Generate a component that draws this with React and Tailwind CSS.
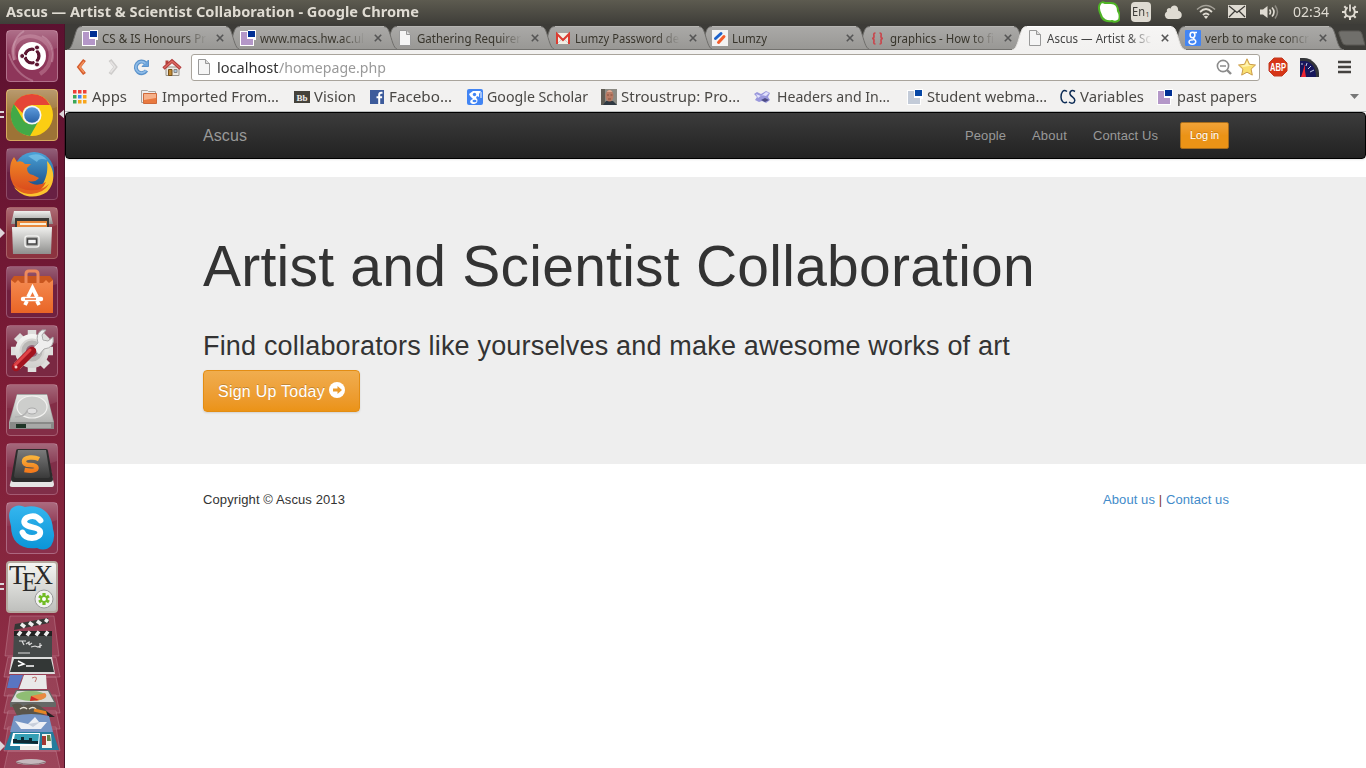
import { useLayoutEffect, useRef, useState } from "react";

/* Text that settles to a given width, by glyph width or by letter spacing. */
function Fit({ w, children, spacing = false, className = "" }) {
  const ref = useRef(null);
  const [style, setStyle] = useState({});
  useLayoutEffect(() => {
    const natural = ref.current.getBoundingClientRect().width;
    setStyle(
      spacing
        ? { letterSpacing: (w - natural) / children.length }
        : { transform: `scaleX(${w / natural})` }
    );
  }, []);
  return (
    <span className={`inline-block shrink-0 whitespace-nowrap ${className}`} style={{ width: w }}>
      <span ref={ref} className="inline-block origin-left" style={style}>{children}</span>
    </span>
  );
}

function Svg({ w = 16, h = 16, vb, className = "", children }) {
  return (
    <svg width={w} height={h} viewBox={vb || `0 0 ${w} ${h}`} className={`shrink-0 ${className}`} fill="none">
      {children}
    </svg>
  );
}

const Squares = ({ light = "#b497c8", dark = "#002f94" }) => (
  <Svg>
    <path d="M0 1h8V0h8v10h-2v6H0z" fill="#fff" />
    <path d="M1 2h6v7h6v6H1z" fill={light} />
    <path d="M8 1h7v6H8z" fill={dark} />
  </Svg>
);
const Page = ({ line = "#999" }) => (
  <Svg>
    <path d="M2.500.500h7l4 4v11h-11z" fill="#f5f5f5" stroke={line} />
    <path d="M9.500.500v4h4" fill="#ddd" stroke={line} />
  </Svg>
);
const Gmail = () => (
  <Svg>
    <path d="M1 3h14v11H1z" fill="#f2efe5" />
    <path d="M3 13l5-5 5 5" stroke="#ccc" />
    <path d="M2 14V4l6 6 6-6v10" stroke="#dc3c31" strokeWidth="2" />
  </Svg>
);
const LumzyIcon = () => (
  <Svg>
    <path d="M0 0h16v16H0z" fill="#f3f3f3" />
    <path d="M3.500 8.500l5.500-5" stroke="#1c62cb" strokeWidth="3" strokeLinecap="round" />
    <path d="M6.500 12.500l5.500-6" stroke="#f55d2b" strokeWidth="3" strokeLinecap="round" />
  </Svg>
);
const Braces = () => (
  <Svg>
    <path d="M5.500 3C3 3 4 5 4 6.500S3 8.500 2 8.500C3 8.500 4 9 4 10.500S3 14 5.500 14M9.500 3C12 3 11 5 11 6.500S12 8.500 13 8.500C12 8.500 11 9 11 10.500S12 14 9.500 14" stroke="#c8484e" strokeWidth="1.700" />
  </Svg>
);
const GoogleG = () => (
  <Svg>
    <rect width="16" height="16" rx="1" fill="#4285f4" />
    <ellipse cx="7.500" cy="5" rx="2.400" ry="2.700" stroke="#fff" strokeWidth="1.500" />
    <path d="M8.500 2.500H12M9 7.500c-2 1.500 2 2 1.800 4.200-.3 3.200-6.800 3.200-6.800.3C4 10.500 6 9.800 8.500 9.800" stroke="#fff" strokeWidth="1.500" />
  </Svg>
);

const tabs = [
  { icon: <Squares />, text: "CS & IS Honours Pr", w: 104 },
  { icon: <Squares />, text: "www.macs.hw.ac.ul", w: 104 },
  { icon: <Page />, text: "Gathering Requirer", w: 104 },
  { icon: <Gmail />, text: "Lumzy Password de", w: 104 },
  { icon: <LumzyIcon />, text: "Lumzy", w: 35 },
  { icon: <Braces />, text: "graphics - How to fi", w: 104 },
  { icon: <Page />, text: "Ascus — Artist & Sc", w: 104, active: true },
  { icon: <GoogleG />, text: "verb to make concr", w: 104 },
];
const layers = ["z-[8]", "z-[7]", "z-[6]", "z-[5]", "z-[4]", "z-[3]", "z-[10]", "z-[1]"];

function Tab({ tab, i }) {
  return (
    <div className={`relative flex h-[26px] w-[157.5px] shrink-0 items-center pl-[15px] pt-[2px] ${layers[i]}`}>
      <svg width="174" height="26" viewBox="0 0 174 26" className="absolute left-0 top-0 -z-10" fill="none">
        <defs>
          <linearGradient id={`tab${i}`} x2="0" y2="1">
            <stop stopColor={tab.active ? "#f6f5f4" : "#aaa9a7"} />
            <stop offset="1" stopColor={tab.active ? "#f2f1f0" : "#989794"} />
          </linearGradient>
        </defs>
        <path
          d="M0 26C4 25 5 21 8 11C10 4 11 2.500 16 2.500H157C162 2.500 163 4 165 10C168 20 169 25 174 26"
          fill={`url(#tab${i})`}
          stroke={tab.active ? "#e4e2df" : "#6f6e6b"}
          strokeWidth="1"
        />
        <path d="M15 2.500H159" stroke={tab.active ? "#fff" : "#b6b5b2"} />
        {!tab.active && <path d="M0 25.500H174" stroke="#73726f" />}
      </svg>
      <div className="flex w-5 shrink-0">{tab.icon}</div>
      <div className={`w-[105px] shrink-0 overflow-hidden text-[13px] leading-5 ${tab.w > 50 ? "[mask-image:linear-gradient(to_right,black_78%,transparent)]" : ""} ${tab.active ? "text-[#444]" : "text-[#38352c]"}`}>
        <Fit w={tab.w}>{tab.text}</Fit>
      </div>
      <Svg w={8} h={8} className="ml-[9px]"><path d="M.8.800l6.400 6.400M7.200.800L.8 7.200" stroke="#555" strokeWidth="1.600" /></Svg>
    </div>
  );
}

const AppsIcon = () => (
  <Svg w={14} h={14}>
    {["#ef3e36", "#ef3e36", "#ef3e36", "#3aa757", "#3f87f5", "#f8a51b", "#3aa757", "#f8a51b", "#f8a51b"].map((c, i) => (
      <rect key={i} x={(i % 3) * 5} y={Math.floor(i / 3) * 5} width="3.500" height="3.500" fill={c} />
    ))}
  </Svg>
);
const Folder = () => (
  <Svg>
    <path d="M.5 1.500h6l1 1h7v11H.5z" fill="#eee" stroke="#a8a29d" />
    <path d="M2.500 4.500h13v10h-13z" fill="#e9793f" stroke="#cf6a3b" />
    <path d="M3 5h12v4L3 11z" fill="#f6b18a" />
  </Svg>
);
const Bb = () => (
  <Svg>
    <path d="M0 2h16v12H0z" fill="#45423b" />
    <text x="8" y="11.500" textAnchor="middle" fontSize="9" fontWeight="bold" fill="#eee" className="font-['Liberation_Serif',serif]">Bb</text>
  </Svg>
);
const Facebook = () => (
  <Svg w={14} h={14}>
    <path d="M0 0h14v14H0z" fill="#3d5b9b" />
    <path d="M12.500 2.800h-1.300c-1.500 0-2 .7-2 2V14M6.500 7.200h5.600" stroke="#fff" strokeWidth="2" />
  </Svg>
);
const Scholar = () => (
  <Svg>
    <rect width="16" height="16" rx="2" fill="#4285f4" />
    <path d="M2 5l4-3h8l-2 3v3l-2-1-1 2c3 2 1 6-2 6s-5-2-3-4l2-1-3-3z" fill="#fff" />
    <path d="M14 3v6" stroke="#fff" />
    <circle cx="7.500" cy="5.500" r="1.700" fill="#4285f4" />
    <ellipse cx="7.500" cy="12" rx="2" ry="1.300" fill="#4285f4" />
  </Svg>
);
const Photo = () => (
  <Svg>
    <path d="M0 0h16v16H0z" fill="#8b8a83" />
    <path d="M0 0h4v16H0z" fill="#605c54" />
    <path d="M2 16l3-4h7l4 4z" fill="#2f3942" />
    <ellipse cx="8.500" cy="6.800" rx="4" ry="5.800" fill="#b97a63" />
    <path d="M6 6h2M9.500 6h2M7 10h3" stroke="#84503e" />
    <path d="M5.500 3q3.500-4 6 0" fill="#dba994" />
  </Svg>
);
const Pixels = () => (
  <Svg>
    <path d="M0 5l3-2 4 2 5-3 4 2-2 4 2 3-4 3-4-2-3 1-4-2 2-3z" fill="#9a98dc" />
    <path d="M2 5l5 2 5-4 3 1-3 3-4-1-4 3z" fill="#e2e2fc" />
    <path d="M7 11l4-2 4 2-4 2z" fill="#4d4c83" />
  </Svg>
);
const CS = () => (
  <Svg>
    <path d="M7 2.500C3-.500 1 4 1 8s2.500 7 6 5M15 2.500c-4-2.500-6 1-4.500 3.500 1.200 2 4.500 2.500 4.300 5.500-.3 3-3.300 3.500-5.800 1.500" stroke="#0d2c55" strokeWidth="1.500" />
  </Svg>
);

const bookmarks = [
  [<AppsIcon />, "w-[68px]", "w-[19px]", "Apps", 35],
  [<Folder />, "w-[153px]", "w-[21px]", "Imported From…", 117],
  [<Bb />, "w-[76px]", "w-5", "Vision", 42],
  [<Facebook />, "w-[97px]", "w-[19px]", "Facebo…", 63],
  [<Scholar />, "w-[134px]", "w-5", "Google Scholar", 101],
  [<Photo />, "w-[153px]", "w-5", "Stroustrup: Pro…", 119],
  [<Pixels />, "w-[153px]", "w-[23px]", "Headers and In…", 113],
  [<Squares light="#c3cbd8" dark="#0647a6" />, "w-[153px]", "w-5", "Student webma…", 120],
  [<CS />, "w-[97px]", "w-5", "Variables", 64],
  [<Squares />, "w-[100px]", "w-5", "past papers", 80],
];

function Tray() {
  return (
    <div className="flex h-6 items-center">
      <Svg w={22} h={22} className="mr-[11px]">
        <path d="M2 3c1-2 3-2 5-1h6c5 0 7 4 7 8 2 3 2 6 1 9-2 2-5 2-7 1-5 1-10-1-11-6C1 10 0 6 2 3z" fill="#fff" stroke="#4fb526" strokeWidth="2" />
      </Svg>
      <div className="mr-[13px] flex h-5 w-5 items-center justify-center rounded-sm bg-[#dfdbd2] text-[13px] text-[#3c3b37]">
        <Fit w={13}>En</Fit><span className="mt-2 text-[7px]">1</span>
      </div>
      <Svg w={18} h={16} className="mr-[14px]"><path d="M4 15a4 4 0 01-1-7.500C2 5 5 3 6.500 4.500 8-.500 15 1 14 6.500c5 1 5 8 0 8.500z" fill="#dfdbd2" /></Svg>
      <Svg w={20} h={16} className="mr-3">
        <path d="M7 11q3-3 6 0" stroke="#dfdbd2" strokeWidth="2" />
        <path d="M4 8q6-6 12 0" stroke="#dfdbd2" strokeWidth="1.800" />
        <path d="M1 5.500q9-8 18 0" stroke="#a5a299" strokeWidth="1.600" />
        <path d="M10 15l-2.200-2.500q2.200-1.500 4.400 0z" fill="#dfdbd2" />
      </Svg>
      <Svg w={18} h={13} className="mr-[14px]">
        <path d="M0 0h18v13H0z" fill="#dfdbd2" />
        <path d="M1 1l8 6.500L17 1M1 12l6-6M17 12l-6-6" stroke="#3c3b37" strokeWidth="1.200" />
      </Svg>
      <Svg w={20} h={16} className="mr-[13px]">
        <path d="M0 5.500h3L7.500 2v12L3 10.500H0z" fill="#dfdbd2" />
        <path d="M9.500 5.500q2 2.500 0 5M12 3.500q4 4.500 0 9" stroke="#dfdbd2" strokeWidth="1.600" />
        <path d="M15 1.500q5 6.500 0 13" stroke="#8d8a82" strokeWidth="1.500" />
      </Svg>
      <div className="mr-[13px] flex text-[14px] text-[#dfdbd2]"><Fit w={36}>02:34</Fit></div>
      <Svg w={16} h={16}>
        <circle cx="8" cy="8" r="4.800" stroke="#dfdbd2" strokeWidth="2" />
        <path d="M8 13v3M0 8h3M13 8h3M2.300 2.300l2.200 2.200M11.500 11.500l2.200 2.200M2.300 13.700l2.200-2.200M11.500 4.500l2.200-2.200" stroke="#dfdbd2" strokeWidth="2" />
        <path d="M8 1v7" stroke="#49473f" strokeWidth="4.500" /><path d="M8 .5v7" stroke="#dfdbd2" strokeWidth="1.800" />
      </Svg>
    </div>
  );
}

function Toolbar() {
  return (
    <div className="flex h-[34px] items-center bg-[#f2f1f0] pl-[11px]">
      <Svg w={12} h={18} className="mr-[19px]"><path d="M8.500 2L3 9l5.500 7" stroke="#d55c2c" strokeWidth="3.600" /><path d="M8 3.500L3.500 9 8 14.500" stroke="#f3935f" strokeWidth="1.500" /></Svg>
      <Svg w={12} h={18} className="mr-[14px]"><path d="M3 2l5.500 7L3 16" stroke="#cecccb" strokeWidth="3.600" /><path d="M3.500 3.500L8 9l-4.500 5.500" stroke="#e6e4e3" strokeWidth="1.500" /></Svg>
      <Svg w={17} h={18} className="mr-3">
        <path d="M13.500 12.500a5.800 5.800 0 11-1-7.500" stroke="#5b93cb" strokeWidth="4" />
        <path d="M15.500 2v6.500H9z" fill="#6ba4dc" stroke="#5b93cb" />
        <path d="M13 12.500a5.600 5.600 0 11-.5-7" stroke="#8fbce8" strokeWidth="1.800" />
      </Svg>
      <Svg w={20} h={19} className="mr-[9px]">
        <path d="M4 9h13v8.500H4z" fill="#ece9e3" stroke="#99948c" />
        <path d="M3.500 2.500h3v4h-3z" fill="#b4413b" />
        <path d="M1.500 10.500L10 3l8.500 7.500" stroke="#b03a3a" strokeWidth="3.400" />
        <path d="M2 10L10 3.200l8 6.800" stroke="#dc6a62" strokeWidth="1.500" />
        <path d="M6.500 11.500h3.500v6H6.500z" fill="#c08a35" stroke="#75501c" />
        <path d="M12 11.500h3v3h-3z" fill="#a9c4dc" stroke="#888" />
      </Svg>
      <div className="flex h-[27px] w-[1069px] items-center rounded-[3px] border border-[#a9a49c] bg-white pl-1 pr-[3px] text-[15px]">
        <Page />
        <span className="ml-[5px] flex text-[#333]"><Fit w={61.5}>localhost</Fit></span>
        <span className="flex flex-1 text-[#999]"><Fit w={107}>/homepage.php</Fit></span>
        <Svg className="mr-[6px]"><circle cx="7" cy="7" r="5.600" stroke="#8b8b8b" strokeWidth="1.600" /><path d="M4 7h6" stroke="#8b8b8b" strokeWidth="1.500" /><path d="M11 11l4 4" stroke="#8b8b8b" strokeWidth="2.400" /></Svg>
        <Svg w={18} h={18}><path d="M9 .8l2.500 5.500 6 .7-4.400 4.100 1.200 6L9 14.200 3.700 17.100l1.200-6L.5 7l6-.7z" fill="#fae071" stroke="#c99b4b" /><path d="M9 3l1.700 4 4 .6L5 9 3 7.600 7.300 7z" fill="#fff3b1" /></Svg>
      </div>
      <Svg w={20} h={20} className="ml-2 mr-3">
        <path d="M6 1h8l5 5v8l-5 5H6l-5-5V6z" fill="#d63517" stroke="#c23a20" />
        <text x="10" y="13.500" textAnchor="middle" fontSize="10" fontWeight="bold" fill="#fff" textLength="16" lengthAdjust="spacingAndGlyphs" className="font-['Liberation_Sans',sans-serif]">ABP</text>
      </Svg>
      <Svg w={19} h={19} className="mr-[19px]">
        <path d="M0 0h4C12 0 19 8 19 15v4H0z" fill="#34363a" />
        <path d="M0 3h4c7 0 12 6 12 16H0z" fill="#17175c" />
        <path d="M2 5v2M7 5l-1 3M11 8l-3 3M14 12l-4 2" stroke="#c7cce7" strokeWidth="1" />
        <path d="M5 6v7l1 6H1l2-6z" fill="#ee2531" />
      </Svg>
      <Svg w={13} h={14}><path d="M0 2h13M0 7h13M0 12h13" stroke="#44423f" strokeWidth="2.600" /></Svg>
    </div>
  );
}

const grads = {
  metal: ["#f0f0ee", "#8f8f8d"], steel: ["#e6e7e5", "#b4b5b3"], key: ["#7a7a7a", "#3a3a3a"],
  bag: ["#f4894f", "#e96526"], skype: ["#35b6ee", "#0a95d8"], fox: ["#f08a26", "#d9471c"],
  globe: ["#4ba3d8", "#15447f"], flame: ["#f9b13a", "#f47b1c"], gear: ["#f6f6f4", "#cfcfcc"], blue: ["#5d9bdc", "#2a62a8"],
};
const Defs = () => (
  <svg width="0" height="0" className="absolute">
    <defs>
      {Object.entries(grads).map(([id, [a, b]]) => (
        <linearGradient key={id} id={id} x2="0" y2="1"><stop stopColor={a} /><stop offset="1" stopColor={b} /></linearGradient>
      ))}
      <linearGradient id="shine" x2="0" y2="1"><stop stopColor="#fff" stopOpacity=".28" /><stop offset="1" stopColor="#fff" stopOpacity=".02" /></linearGradient>
    </defs>
  </svg>
);

const icons = [
  <>
    <path d="M9 30C2 12 18 2 33 8c16 7 15 27 1 36" stroke="#e8bccb" strokeWidth="4" opacity=".3" />
    <path d="M3 24q6 20 24 27M18 1Q4 10 8 30M36 6q14 8 10 26" stroke="#f0d0db" strokeWidth="2" opacity=".3" />
    <circle cx="26" cy="26" r="14" fill="#fff" />
    <circle cx="26" cy="26" r="6.900" stroke="#5c1632" strokeWidth="3.400" />
    <path d="M26 26H13M26 26l7-12M26 26l7 12" stroke="#fff" strokeWidth="1.600" />
    <circle cx="26" cy="26" r="5.200" fill="#fff" />
    <g fill="#5c1632" stroke="#fff"><circle cx="16.200" cy="26" r="2.500" /><circle cx="31" cy="17.500" r="2.500" /><circle cx="31" cy="34.500" r="2.500" /></g>
  </>,
  <>
    <circle cx="26" cy="26" r="21" fill="#fbce13" />
    <path d="M8 15a21 21 0 0016 32l8-14-7 2a10 10 0 01-9-6z" fill="#42a947" />
    <path d="M7.800 15.200A21 21 0 0126 5a21 21 0 0118 11H26a10 10 0 00-9.500 8z" fill="#e54536" />
    <circle cx="26" cy="26" r="9.500" fill="#f5f7fb" /><circle cx="26" cy="26" r="7.800" fill="url(#blue)" />
  </>,
  <>
    <circle cx="28" cy="24" r="20" fill="url(#globe)" />
    <path d="M22 8Q34 3 41 12 33 9 31 14z" fill="#7cc6ea" opacity=".7" />
    <path d="M41 13c8 8 9 22 0 31-12 8-26 5-33-5 10 8 24 6 29-3 4-8 5-14 4-23z" fill="#fbc42e" />
    <path d="M4 22q0-8 4-13l3 5q5-2 8 2h6l-4 4q0 6 6 7l6 3q-4 5-11 3 8 7 18 1-4 9-12 11C15 47 4 38 4 24z" fill="url(#fox)" />
    <path d="M6 34q5 12 19 12 13-1 18-10-7 6-14 6-13 2-23-8z" fill="#e2601f" />
  </>,
  <>
    <path d="M8 4h36l3 13H5z" fill="url(#metal)" /><path d="M9 11h34v12H9z" fill="#3a3936" />
    <path d="M11 14h30v9H11z" fill="#e98a3d" /><path d="M14 16h26v2H14z" fill="#f8efdb" />
    <path d="M6 20h40l-1 27H7z" fill="url(#metal)" /><path d="M6 20h40v2H6z" fill="#e9e9e7" />
    <rect x="19" y="29" width="14" height="11" rx="2.500" stroke="#f0f0ee" strokeWidth="1.500" fill="#a5a5a3" /><path d="M21.500 32h9v5h-9z" fill="#f4f4f4" stroke="#444" strokeWidth="1.500" />
  </>,
  <>
    <path d="M5 14h42v33H5z" fill="url(#bag)" /><path d="M8 10h36l3 4-4 3-3-3-3 3H15l-3-3-3 3-4-3z" fill="#c9561f" />
    <path d="M20 17V8q0-3 3-3h6q3 0 3 3v9" stroke="#ee8a5c" strokeWidth="3" />
    <path d="M19 39l2-4M31 35l2 4M22 31l4.500-9 4.500 9" stroke="#fff" strokeWidth="3.800" /><path d="M17 33h18" stroke="#fff" strokeWidth="4.400" strokeLinecap="round" /><path d="M19 33h11" stroke="#ed7137" strokeWidth="1.500" />
  </>,
  <>
    <path d="M26 5v42M5 26h42M11 11l30 30M11 41l30-30" stroke="#dededc" strokeWidth="8.500" />
    <circle cx="26" cy="26" r="17" fill="url(#gear)" /><circle cx="26" cy="26" r="11.500" fill="#b9b7b5" stroke="#d6d4d2" strokeWidth="2" /><circle cx="26" cy="26" r="6" fill="#93647a" />
    <path d="M27 23l5-5q-3-9 4-13h4l-4 5 1 5 5 1 5-4q2 11-9 12l-5 6z" fill="#eee" stroke="#aaa" />
    <path d="M10 42l16-16" stroke="#a3141f" strokeWidth="8.500" strokeLinecap="round" /><path d="M9 40l15-15" stroke="#df4347" strokeWidth="3" strokeLinecap="round" /><circle cx="10" cy="42" r="1.500" fill="#f2c8c8" />
  </>,
  <>
    <path d="M11 10h30l7 28v7H3v-7z" fill="#a5a6a4" /><path d="M11 11h30l6 27H4z" fill="url(#steel)" />
    <ellipse cx="26" cy="23" rx="15" ry="11" fill="#cdcecc" stroke="#f2f2f0" strokeWidth="1.200" /><ellipse cx="26" cy="27" rx="5" ry="3" fill="#e0e0e0" stroke="#aaa" />
    <path d="M9 33q10 0 12-6" stroke="#b2b2b2" strokeWidth="1.500" /><path d="M4 38h44v7H4z" fill="#898a88" /><path d="M15 40h30v4H15z" fill="#a8a9a7" /><path d="M10 40h10v4H10z" fill="#1e3426" />
  </>,
  <>
    <path d="M8 28h37l3 13q0 3-2 3H6q-3 0-2-3z" fill="#e5e5e5" /><path d="M12 6h28q2 0 2 2l5 28q0 3-3 3H8q-3 0-3-3L10 8q0-2 2-2z" fill="#2c2c2c" /><path d="M12 7h28l4 26q0 2-2 2H10q-2 0-2-2z" fill="url(#key)" />
    <path d="M33 16q-4-2-9-1.500-6 .5-6 4t6 3.500q7 0 6.500 3.500-1 3.500-12 1.500" stroke="url(#flame)" strokeWidth="4.500" />
  </>,
  <>
    <path d="M5 7q6-6 14-2c14-3 27 4 28 22q3 9-2 17-6 6-14 2C15 48 5 40 5 24 3 16 2 12 5 7z" fill="url(#skype)" />
    <path d="M34.500 18.500C32 15 28 13.500 24 14.500c-5 1-7 4.500-5 7.500 3 4 13 2.500 15 7 1.500 4-3 7-8 7-4 0-8-2-9.500-5.500" stroke="#fff" strokeWidth="5.800" strokeLinecap="round" />
  </>,
];
const tints = [
  "bg-[#8e365a] border-[#b2718b]", "bg-[#9d7336] border-[#d7aa60]", "bg-[#682043] border-[#8d4a66]",
  "bg-[#8c333f] border-[#a76167]", "bg-[#70203f] border-[#985370]", "bg-[#7a2842] border-[#a35b73]",
  "bg-[#832d46] border-[#a65d71]", "bg-[#802e48] border-[#a45a72]", "bg-[#8a304c] border-[#ac6780]",
];

function Launcher() {
  return (
    <aside className="relative flex w-[65px] shrink-0 flex-col items-center overflow-hidden border-r border-[#4b1329] bg-linear-to-b from-[#5c1130] via-[#7d1c36] to-[#92334a] pr-px pt-[6px]">
      <Defs />
      {icons.map((icon, i) => (
        <div key={i} className={`mb-[7px] flex h-[52px] w-[52px] shrink-0 items-center justify-center rounded border ${tints[i]}`}>
          <Svg w={52} h={52}><path d="M1 1h50v17Q26 28 1 24z" fill="url(#shine)" />{icon}</Svg>
        </div>
      ))}
      <div className="h-[52px] w-[52px] shrink-0 rounded border-2 border-[#b5aaa0] bg-linear-to-b from-[#f5f5f2] to-[#bfc0bd]">
        <Svg w={48} h={48}>
          <g fill="#292929" className="font-['Liberation_Serif',serif]">
            <text x="1" y="21" fontSize="27" textLength="17" lengthAdjust="spacingAndGlyphs">T</text>
            <text x="14" y="28" fontSize="27" textLength="15" lengthAdjust="spacingAndGlyphs">E</text>
            <text x="26" y="21" fontSize="27" textLength="19" lengthAdjust="spacingAndGlyphs">X</text>
          </g>
          <circle cx="36" cy="36" r="9" fill="#f1f1ef" stroke="#999" />
          <path d="M36 30v12M31 33l10 6M31 39l10-6" stroke="#72bc25" strokeWidth="3.200" /><circle cx="36" cy="36" r="3.600" fill="#72bc25" /><circle cx="36" cy="36" r="2" fill="#fff" />
        </Svg>
      </div>
      <Svg w={64} h={156} className="-mr-px">
        <g fill="#bd7a8c" fillOpacity=".25" stroke="#c88b9b" strokeOpacity=".45">
          <path d="M10 3h44l5 40H5zM8 44h48l4 20H4zM8 64h48l4 19H4zM8 82h48l4 18H4zM8 98h48l4 18H4zM8 114h48l4 24H4zM8 138h48l4 18H4z" />
        </g>
        <path d="M14 20h38v24H13z" fill="#454949" />
        <path d="M14 17l1-6 33-6 1 5z" fill="#353735" /><path d="M21 11l4 3M29 9.500l4 3M37 8l4 3M45 6.500l3 2" stroke="#eee" strokeWidth="3.500" />
        <path d="M14 18h38v5H14z" fill="#222" /><path d="M18 22.500l3-4M27 22.500l3-4M36 22.500l3-4M45 22.500l3-4" stroke="#eee" strokeWidth="3.500" />
        <path d="M19 28h7M22 28l2 4M26 31l3-2v3M29 32l3-2M31 34l4-1 3 1 4-2M40 30v5M18 40h12" stroke="#ddd" strokeWidth="1.200" />
        <path d="M12 44h40l3 17H9z" fill="#ddd" /><path d="M14 46h37l3 13H10z" fill="#333736" /><path d="M18 48l6 3-6 2M26 53h8" stroke="#fff" strokeWidth="1.500" />
        <path d="M10 62h13l-5 13H7z" fill="#5976c2" /><path d="M24 62h22l1 14H19z" fill="#e9e9e9" /><path d="M32 65q7-3 3 4" stroke="#bb6c66" />
        <path d="M16 77h33l7 13v4H10v-4z" fill="#656866" /><path d="M17 78h31l6 11H11z" fill="#d9dad8" /><ellipse cx="31" cy="83" rx="15" ry="5" fill="#8fbd74" /><path d="M31 83l14-3q5 5-9 8z" fill="#e98a43" /><path d="M31 83l8 4-9 1z" fill="#d32828" />
        <path d="M12 92q7-4 11 1 9-4 17 0l8 6-12 8H19z" fill="#5a554a" /><path d="M20 96q4-3 7 0M29 96q4-3 7 0" stroke="#e8e4d8" strokeWidth="1.500" /><path d="M34 97l13 3" stroke="#e48624" strokeWidth="3" /><path d="M46 98l9 6-7 0z" fill="#222" />
        <path d="M14 103q17-4 35 0l4 16H10z" fill="#7595c5" /><path d="M15 108l13 3 7-7 4 5 8 0-6 7H21z" fill="#eef0f5" /><path d="M28 111l12-2-7 5z" fill="#c9cfdb" />
        <path d="M11 119h42l6 18H4z" fill="#247c9d" /><path d="M20 123h19v14H20z" fill="#ecece6" /><path d="M13 120h27l-1 13H10z" fill="#fff" /><path d="M15 121h24l-1 10H13z" fill="#36a0b5" /><path d="M13 130v-4h4v1h4v-3h3v3h5v-2h3v3h6v3z" fill="#0d2932" />
        <path d="M42 121h9l1 14H42z" fill="#f3f3ed" /><path d="M42 123h4v9h-4z" fill="#a43732" /><path d="M47 122h3l1 6h-4z" fill="#62834a" />
        <ellipse cx="31" cy="149" rx="15" ry="3" fill="#c5b9bd" /><path d="M16 149q15 5 30 0" stroke="#877176" />
      </Svg>
      <svg width="65" height="744" viewBox="0 24 65 744" className="absolute left-0 top-0" fill="#ddd6da">
        <path d="M0 111h4v2H0zM0 116h4v2H0zM65 109v10l-6-5zM0 228l5 5-5 5zM0 583h4v2H0zM0 588h4v2H0zM0 741l5 5-5 5z" />
      </svg>
    </aside>
  );
}

function Site() {
  return (
    <main className="flex-1 bg-white font-['Liberation_Sans',Arial,sans-serif] text-[13px] text-[#333]">
      <nav className="flex h-[47px] items-center rounded border border-black bg-linear-to-b from-[#3c3c3c] to-[#222] pl-[137px] pr-[136px] text-[#999] shadow-[0_1px_2px_rgba(0,0,0,0.1)]">
        <div className="flex flex-1 text-[16px]"><Fit spacing w={44}>Ascus</Fit></div>
        <div className="flex items-center">
          <Fit spacing w={41} className="mr-[26px]">People</Fit>
          <Fit spacing w={35} className="mr-[26px]">About</Fit>
          <Fit spacing w={65} className="mr-[22px]">Contact Us</Fit>
          <button className="flex h-[27px] w-[49px] items-center justify-center rounded-[2px] border border-[#a56b1b] bg-linear-to-b from-[#f0a236] to-[#eb9316] to-50% text-[11px] text-white [text-shadow:0_-1px_0_rgba(0,0,0,0.2)]"><Fit spacing w={29}>Log in</Fit></button>
        </div>
      </nav>
      <section className="mt-[18px] h-[287px] bg-[#eee] pl-[138px]">
        <h1 className="flex pt-[58px] text-[57px] leading-[63px]"><Fit spacing w={832}>Artist and Scientist Collaboration</Fit></h1>
        <h2 className="mt-[32px] flex text-[27px] leading-[32px]"><Fit spacing w={807}>Find collaborators like yourselves and make awesome works of art</Fit></h2>
        <button className="mt-2 flex h-[42px] w-[157px] items-center rounded border border-[#e38d13] bg-linear-to-b from-[#f0ad4e] to-[#eb9316] pl-[14px] text-[16px] text-white shadow-[0_1px_2px_rgba(0,0,0,0.12)] [text-shadow:0_-1px_0_rgba(0,0,0,0.2)]">
          <Fit spacing w={107} className="pt-px">Sign Up Today</Fit>
          <Svg className="-mt-[3px] ml-1"><circle cx="8" cy="8" r="8" fill="#fff" /><path d="M4 6.500h4.500V4l4.500 4-4.500 4V9.500H4z" fill="#ec9c2c" /></Svg>
        </button>
      </section>
      <footer className="flex justify-between pl-[138px] pr-[137px] pt-[26px] leading-5">
        <Fit spacing w={142}>Copyright © Ascus 2013</Fit>
        <div className="flex text-[#428bca]">
          <Fit spacing w={52}>About us</Fit><span className="w-[11px] text-center text-[#843c2c]">|</span><Fit spacing w={63}>Contact us</Fit>
        </div>
      </footer>
    </main>
  );
}

export default function App() {
  return (
    <div className="flex h-[768px] w-[1366px] flex-col overflow-hidden bg-white font-['Noto_Sans',sans-serif]">
      <header className="flex h-6 shrink-0 items-center justify-between bg-linear-to-b from-[#5d5b50] to-[#3f3e39] pb-px pl-[6px] pr-[8px]">
        <div className="flex text-[14px] font-bold text-[#dfdbd2]"><Fit w={413}>Ascus — Artist &amp; Scientist Collaboration - Google Chrome</Fit></div>
        <Tray />
      </header>
      <div className="flex min-h-0 flex-1">
        <Launcher />
        <div className="flex min-w-0 flex-1 flex-col">
          <div className="relative z-0 flex h-[26px] overflow-hidden bg-[#3d3c38] pl-[2px]">
            {tabs.map((t, i) => <Tab key={i} tab={t} i={i} />)}
            <svg width="27" height="16" viewBox="0 0 27 16" className="ml-[11px] mt-[6px] shrink-0" fill="#706f6b"><path d="M3 1h18q2 0 3 3l3 11H8q-3 0-4-3L1 4q-1-3 2-3z" stroke="#5b5954" /></svg>
          </div>
          <Toolbar />
          <div className="flex h-[28px] items-center border-b border-[#b9bcbc] bg-[#f2f1f0] pb-[2px] pl-2 text-[14px] text-[#4a4845]">
            {bookmarks.map(([icon, width, slot, text, w], i) => (
              <div key={i} className={`flex shrink-0 items-center ${width}`}><span className={`flex shrink-0 ${slot}`}>{icon}</span><Fit w={w}>{text}</Fit></div>
            ))}
            <Svg w={9} h={6} className="ml-[93px]"><path d="M0 0h9L4.500 5z" fill="#777" /></Svg>
          </div>
          <Site />
        </div>
      </div>
    </div>
  );
}
